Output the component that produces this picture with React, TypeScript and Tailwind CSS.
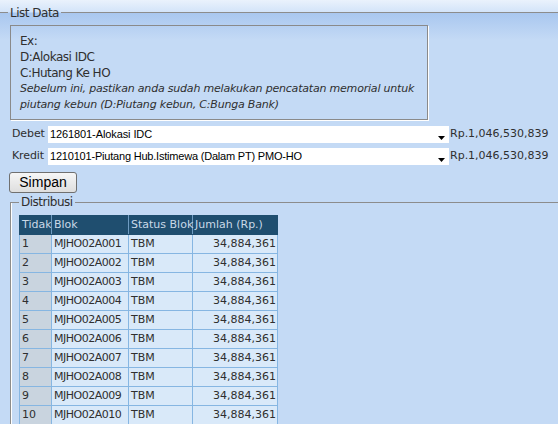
import React from "react";

const rows = Array.from({ length: 10 }, (_, i) => i + 1);

function Arrow() {
  return (
    <svg width="7" height="4" viewBox="0 0 7 4" className="absolute right-[4px] top-[10px]">
      <polygon points="0,0 7,0 3.5,4" fill="#000" />
    </svg>
  );
}

export default function App() {
  return (
    <div className="w-[558px] h-[424px] overflow-hidden bg-[linear-gradient(to_bottom,#eaf2fc_0px,#d3e4f9_12px,#a9c7ef_13px,#c4daf5_40px,#c4daf5_100%)] text-[#2f2f2f] font-['DejaVu_Sans',sans-serif] text-[11px]">
      {/* List Data legend */}
      <div className="flex h-[25px]">
        <div className="w-[8px] mt-[12px] h-px bg-[#8c8c8c]" />
        <span className="px-[2px] leading-[26px] text-[12px] tracking-[-0.5px]">List Data</span>
        <div className="flex-1 mt-[12px] h-px bg-[#8c8c8c]" />
      </div>

      {/* Info box */}
      <div className="ml-[10px] w-[418px] h-[95px] border border-[#8a8a8a] shadow-[1px_1px_0_#ffffff] pl-[9px] pt-[7px] leading-[16px] text-[11px] tracking-[-0.2px] whitespace-nowrap">
        <div className="text-[12px] tracking-[-0.5px]">Ex:</div>
        <div className="text-[12px] tracking-[-0.5px]">D:Alokasi IDC</div>
        <div className="text-[12px] tracking-[-0.5px]">C:Hutang Ke HO</div>
        <div className="italic">Sebelum ini, pastikan anda sudah melakukan pencatatan memorial untuk</div>
        <div className="italic">piutang kebun (D:Piutang kebun, C:Bunga Bank)</div>
      </div>

      {/* Debet */}
      <div className="flex items-center mt-[6px] h-[17px]">
        <span className="w-[48px] pl-[12px] text-[11px] tracking-[-0.1px]">Debet</span>
        <div className="relative w-[401px] h-[17px] bg-white pl-[2px] font-['Liberation_Sans',sans-serif] text-[11px] tracking-[-0.1px] leading-[17px] text-black">
          1261801-Alokasi IDC
          <Arrow />
        </div>
        <span className="ml-[1px] text-[11px]">Rp.1,046,530,839</span>
      </div>

      {/* Kredit */}
      <div className="flex items-center mt-[5px] h-[17px]">
        <span className="w-[48px] pl-[12px] text-[11px] tracking-[-0.1px]">Kredit</span>
        <div className="relative w-[401px] h-[17px] bg-white pl-[2px] font-['Liberation_Sans',sans-serif] text-[11px] tracking-[-0.2px] leading-[17px] text-black">
          1210101-Piutang Hub.Istimewa (Dalam PT) PMO-HO
          <Arrow />
        </div>
        <span className="ml-[1px] text-[11px]">Rp.1,046,530,839</span>
      </div>

      {/* Simpan */}
      <button className="ml-[9px] mt-[7px] w-[68px] h-[21px] rounded-[3px] border border-[#707070] bg-[linear-gradient(to_bottom,#f6f6f6,#dedede)] font-['Liberation_Sans',sans-serif] text-[14px] leading-[19px] text-black">
        Simpan
      </button>

      {/* Distribusi */}
      <div className="flex">
        <div className="w-px mt-[9px] bg-[#8c8c8c] shadow-[1px_0_0_#ffffff] ml-[10px] h-[300px]" />
        <div className="flex-1">
          <div className="flex h-[22px]">
            <div className="w-[8px] mt-[9px] h-px bg-[#8c8c8c]" />
            <span className="px-[2px] leading-[19px] text-[12px] tracking-[-0.5px]">Distribusi</span>
            <div className="flex-1 mt-[9px] h-px bg-[#8c8c8c]" />
          </div>
          <table className="ml-[8px] border-collapse table-fixed w-[258px] text-[11px]">
            <colgroup>
              <col className="w-[32px]" />
              <col className="w-[77px]" />
              <col className="w-[64px]" />
              <col className="w-[85px]" />
            </colgroup>
            <thead>
              <tr className="h-[19px] bg-[#1f4e6f] text-[#c9d9e8]">
                <th className="font-normal text-left pl-[2px] border border-[#1f4e6f] border-r-[#6f9cc2] p-0 leading-[18px] whitespace-nowrap overflow-hidden">Tidak</th>
                <th className="font-normal text-left pl-[2px] border border-[#1f4e6f] border-r-[#6f9cc2] p-0 leading-[18px]">Blok</th>
                <th className="font-normal text-left pl-[2px] border border-[#1f4e6f] border-r-[#6f9cc2] p-0 leading-[18px] whitespace-nowrap">Status Blok</th>
                <th className="font-normal text-left pl-[2px] border border-[#1f4e6f] p-0 leading-[18px] whitespace-nowrap">Jumlah (Rp.)</th>
              </tr>
            </thead>
            <tbody>
              {rows.map((n) => (
                <tr key={n} className="h-[19px]">
                  <td className="bg-[#c9d4df] border border-[#86b6e2] pl-[2px] p-0 leading-[18px]">{n}</td>
                  <td className="bg-[#d9e9f9] border border-[#86b6e2] pl-[2px] p-0 leading-[18px] whitespace-nowrap tracking-[-0.5px]">{`MJHO02A${String(n).padStart(3, "0")}`}</td>
                  <td className="bg-[#d9e9f9] border border-[#86b6e2] pl-[2px] p-0 leading-[18px]">TBM</td>
                  <td className="bg-[#d9e9f9] border border-[#86b6e2] pr-[1px] p-0 leading-[18px] text-right">34,884,361</td>
                </tr>
              ))}
            </tbody>
          </table>
        </div>
      </div>
    </div>
  );
}
